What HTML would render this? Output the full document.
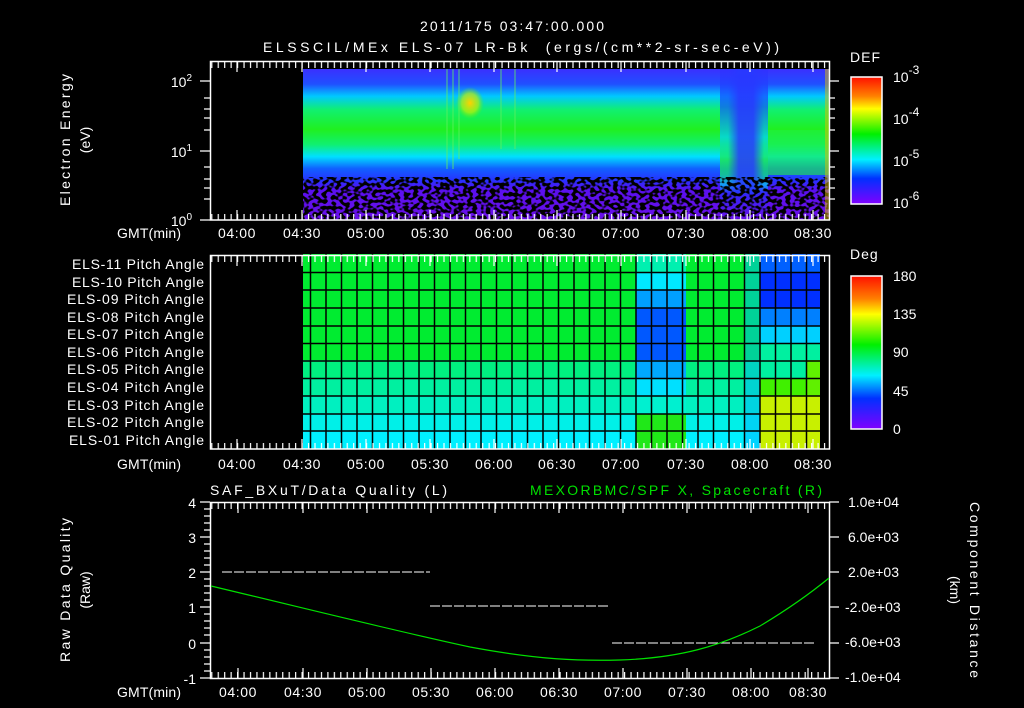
<!DOCTYPE html>
<html><head><meta charset="utf-8"><style>
html,body{margin:0;padding:0;background:#000;}
svg{display:block}
text{font-family:"Liberation Sans",sans-serif;fill:#fff;font-size:14px}
</style></head><body>
<svg width="1024" height="708" viewBox="0 0 1024 708" xmlns="http://www.w3.org/2000/svg">
<defs>
<linearGradient id="spec" x1="0" y1="69" x2="0" y2="220" gradientUnits="userSpaceOnUse">
<stop offset="0" stop-color="#3a30ff"/>
<stop offset="0.1" stop-color="#2050ff"/>
<stop offset="0.18" stop-color="#00c8ff"/>
<stop offset="0.27" stop-color="#10f070"/>
<stop offset="0.4" stop-color="#20f020"/>
<stop offset="0.5" stop-color="#10f070"/>
<stop offset="0.58" stop-color="#00e0ff"/>
<stop offset="0.66" stop-color="#1060ff"/>
<stop offset="0.74" stop-color="#2830ff"/>
<stop offset="0.8" stop-color="#5a10f0"/>
<stop offset="1" stop-color="#6a10e8"/>
</linearGradient>
<linearGradient id="spec2" x1="0" y1="69" x2="0" y2="220" gradientUnits="userSpaceOnUse">
<stop offset="0" stop-color="#3030ff"/>
<stop offset="0.25" stop-color="#1050ff"/>
<stop offset="0.45" stop-color="#00d0ff"/>
<stop offset="0.6" stop-color="#20f030"/>
<stop offset="0.7" stop-color="#10f070"/>
<stop offset="0.77" stop-color="#00d0ff"/>
<stop offset="0.82" stop-color="#2030ff"/>
<stop offset="1" stop-color="#6a10e8"/>
</linearGradient>
<linearGradient id="fadeL" x1="0" y1="0" x2="1" y2="0">
<stop offset="0" stop-color="#2838ff" stop-opacity="0"/>
<stop offset="0.3" stop-color="#2838ff" stop-opacity="0.85"/>
<stop offset="0.7" stop-color="#2838ff" stop-opacity="0.85"/>
<stop offset="1" stop-color="#2838ff" stop-opacity="0"/>
</linearGradient>
<radialGradient id="yel" cx="0.5" cy="0.5" r="0.5">
<stop offset="0" stop-color="#ffd000"/>
<stop offset="0.6" stop-color="#c0f000" stop-opacity="0.7"/>
<stop offset="1" stop-color="#60f000" stop-opacity="0"/>
</radialGradient>
<linearGradient id="cb1" x1="0" y1="0" x2="0" y2="1">
<stop offset="0" stop-color="#ff1000"/>
<stop offset="0.15" stop-color="#ff8000"/>
<stop offset="0.25" stop-color="#ffff00"/>
<stop offset="0.45" stop-color="#00f000"/>
<stop offset="0.6" stop-color="#00f0c0"/>
<stop offset="0.65" stop-color="#00f0ff"/>
<stop offset="0.8" stop-color="#0030ff"/>
<stop offset="1" stop-color="#8000ff"/>
</linearGradient>
<filter id="noise" x="0" y="0" width="100%" height="100%">
<feTurbulence type="fractalNoise" baseFrequency="0.22 0.3" numOctaves="1" seed="3"/>
<feColorMatrix type="matrix" values="0 0 0 0 0  0 0 0 0 0  0 0 0 0 0  0 0 0 -9 5.0"/>
</filter>
<pattern id="tk" x="211.2" y="0" width="6.45" height="708" patternUnits="userSpaceOnUse">
<rect x="0" y="0" width="1.2" height="708" fill="#fff"/>
</pattern>
</defs>

<text x="420" y="31" font-size="16" textLength="184" lengthAdjust="spacing">2011/175 03:47:00.000</text>
<text x="263" y="52" font-size="16" textLength="516" lengthAdjust="spacing" xml:space="preserve">ELSSCIL/MEx ELS-07 LR-Bk  (ergs/(cm**2-sr-sec-eV))</text>

<!-- PANEL 1 -->
<rect x="303" y="69" width="526" height="151" fill="url(#spec)"/>
<rect x="720" y="69" width="48" height="151" fill="url(#spec2)" opacity="0.7"/>
<rect x="728" y="69" width="36" height="125" fill="url(#fadeL)"/>
<rect x="768" y="130" width="61" height="45" fill="#20f040" opacity="0.6"/>
<ellipse cx="470" cy="103" rx="14" ry="16" fill="url(#yel)"/>
<g opacity="0.4" fill="#60f060">
<rect x="446" y="69" width="2" height="100"/><rect x="452" y="69" width="2" height="100"/><rect x="458" y="69" width="2" height="90"/><rect x="500" y="69" width="2" height="80"/><rect x="514" y="69" width="2" height="80"/>
</g>
<rect x="303" y="177" width="526" height="43" fill="#000" filter="url(#noise)"/>
<rect x="825" y="69" width="4" height="151" fill="#e0c000" opacity="0.5"/>
<rect x="210.5" y="61.5" width="619" height="158.5" fill="none" stroke="#fff" stroke-width="1.5"/>
<rect x="211" y="62" width="618" height="6" fill="url(#tk)"/>
<rect x="211" y="214" width="618" height="6" fill="url(#tk)"/>
<g stroke="#fff" stroke-width="1.2">
<path d="M237 62V72M302 62V72M366 62V72M430 62V72M494 62V72M557 62V72M621 62V72M686 62V72M750 62V72M813 62V72M237 220V210M302 220V210M366 220V210M430 220V210M494 220V210M557 220V210M621 220V210M686 220V210M750 220V210M813 220V210"/>
<path d="M200 81H210M200 151H210M200 220H210 M204 98H210M204 109H210M204 118H210M204 130H210M204 167H210M204 179H210M204 188H210M204 199H210M829 81H839M829 151H839M829 98H835M829 109H835M829 118H835M829 130H835M829 167H835M829 179H835M829 188H835M829 199H835"/>
</g>
<text x="192" y="87" text-anchor="end">10<tspan font-size="10" dy="-6">2</tspan></text>
<text x="192" y="157" text-anchor="end">10<tspan font-size="10" dy="-6">1</tspan></text>
<text x="192" y="226" text-anchor="end">10<tspan font-size="10" dy="-6">0</tspan></text>
<text transform="translate(70,140) rotate(-90)" x="-66" font-size="16" textLength="132" lengthAdjust="spacing">Electron Energy</text>
<text transform="translate(90,140) rotate(-90)" text-anchor="middle" font-size="16">(eV)</text>
<text x="117" y="238" font-size="15" textLength="64" lengthAdjust="spacing">GMT(min)</text>
<g text-anchor="middle" font-size="15" letter-spacing="0.6">
<text x="237" y="238">04:00</text><text x="302" y="238">04:30</text><text x="366" y="238">05:00</text><text x="430" y="238">05:30</text><text x="494" y="238">06:00</text><text x="557" y="238">06:30</text><text x="621" y="238">07:00</text><text x="686" y="238">07:30</text><text x="750" y="238">08:00</text><text x="813" y="238">08:30</text>
</g>
<rect x="851" y="77" width="31" height="127" fill="url(#cb1)" stroke="#fff" stroke-width="1.5"/>
<text x="850" y="62" font-size="17" letter-spacing="1">DEF</text>
<text x="893" y="82" font-size="17">10<tspan font-size="12" dy="-8">-3</tspan></text>
<text x="893" y="124" font-size="17">10<tspan font-size="12" dy="-8">-4</tspan></text>
<text x="893" y="166" font-size="17">10<tspan font-size="12" dy="-8">-5</tspan></text>
<text x="893" y="208" font-size="17">10<tspan font-size="12" dy="-8">-6</tspan></text>

<!-- PANEL 2 -->
<g>
<rect x="303" y="254" width="517" height="106" fill="#00ec30"/>
<rect x="303" y="360" width="517" height="18" fill="#00f080"/>
<rect x="303" y="378" width="517" height="18" fill="#00f0a0"/>
<rect x="303" y="396" width="517" height="18" fill="#00f0c0"/>
<rect x="303" y="414" width="517" height="18" fill="#00f0e8"/>
<rect x="303" y="431" width="517" height="18" fill="#00f0ff"/>
<rect x="636" y="254" width="50" height="18" fill="#00f0b0"/>
<rect x="636" y="272" width="50" height="18" fill="#00e8ff"/>
<rect x="636" y="290" width="50" height="18" fill="#00a0ff"/>
<rect x="636" y="308" width="50" height="52" fill="#0058ff"/>
<rect x="636" y="360" width="50" height="18" fill="#00a8ff"/>
<rect x="636" y="378" width="50" height="18" fill="#00e0ff"/>
<rect x="636" y="396" width="50" height="18" fill="#00f0d0"/>
<rect x="636" y="414" width="50" height="35" fill="#20e818"/>
<rect x="760" y="254" width="60" height="18" fill="#0060ff"/>
<rect x="760" y="272" width="60" height="36" fill="#0030ff"/>
<rect x="760" y="308" width="60" height="18" fill="#0080ff"/>
<rect x="760" y="326" width="60" height="18" fill="#00d0ff"/>
<rect x="760" y="344" width="60" height="34" fill="#00f0a0"/>
<rect x="760" y="378" width="60" height="18" fill="#40f000"/>
<rect x="760" y="396" width="60" height="53" fill="#c8f000"/>
<rect x="806" y="360" width="14" height="36" fill="#60f000"/>
<rect x="745" y="254" width="15" height="195" fill="#00b8ff" opacity="0.5"/>
</g>
<g stroke="#000" stroke-width="1.5">
<path d="M303 272.5H820M303 290H820M303 308H820M303 326H820M303 343.5H820M303 361H820M303 378.5H820M303 396H820M303 414H820M303 431H820"/>
<path d="M310.5 254V449M326 254V449M341.5 254V449M357 254V449M372.5 254V449M388 254V449M403.5 254V449M419 254V449M434.5 254V449M450 254V449M465.5 254V449M481 254V449M496.5 254V449M512 254V449M527.5 254V449M543 254V449M558.5 254V449M574 254V449M589.5 254V449M605 254V449M620.5 254V449M636 254V449M651.5 254V449M667 254V449M682.5 254V449M698 254V449M713.5 254V449M729 254V449M744.5 254V449M760 254V449M775.5 254V449M791 254V449M806.5 254V449"/>
</g>
<rect x="210.5" y="255.5" width="619" height="193.5" fill="none" stroke="#fff" stroke-width="1.5"/>
<rect x="211" y="256" width="618" height="6" fill="url(#tk)"/>
<rect x="211" y="443" width="618" height="6" fill="url(#tk)"/>
<g stroke="#fff" stroke-width="1.2">
<path d="M237 256V266M302 256V266M366 256V266M430 256V266M494 256V266M557 256V266M621 256V266M686 256V266M750 256V266M813 256V266M237 449V439M302 449V439M366 449V439M430 449V439M494 449V439M557 449V439M621 449V439M686 449V439M750 449V439M813 449V439"/>
</g>
<g font-size="14">
<text x="72" y="269" textLength="132" lengthAdjust="spacing">ELS-11 Pitch Angle</text><text x="72" y="287" textLength="132" lengthAdjust="spacing">ELS-10 Pitch Angle</text><text x="67" y="304" textLength="137" lengthAdjust="spacing">ELS-09 Pitch Angle</text><text x="67" y="322" textLength="137" lengthAdjust="spacing">ELS-08 Pitch Angle</text><text x="67" y="339" textLength="137" lengthAdjust="spacing">ELS-07 Pitch Angle</text><text x="67" y="357" textLength="137" lengthAdjust="spacing">ELS-06 Pitch Angle</text><text x="67" y="374" textLength="137" lengthAdjust="spacing">ELS-05 Pitch Angle</text><text x="67" y="392" textLength="137" lengthAdjust="spacing">ELS-04 Pitch Angle</text><text x="67" y="410" textLength="137" lengthAdjust="spacing">ELS-03 Pitch Angle</text><text x="67" y="427" textLength="137" lengthAdjust="spacing">ELS-02 Pitch Angle</text><text x="69" y="445" textLength="135" lengthAdjust="spacing">ELS-01 Pitch Angle</text>
</g>
<text x="117" y="469" font-size="15" textLength="64" lengthAdjust="spacing">GMT(min)</text>
<g text-anchor="middle" font-size="15" letter-spacing="0.6">
<text x="237" y="469">04:00</text><text x="302" y="469">04:30</text><text x="366" y="469">05:00</text><text x="430" y="469">05:30</text><text x="494" y="469">06:00</text><text x="557" y="469">06:30</text><text x="621" y="469">07:00</text><text x="686" y="469">07:30</text><text x="750" y="469">08:00</text><text x="813" y="469">08:30</text>
</g>
<rect x="851" y="276" width="31" height="153" fill="url(#cb1)" stroke="#fff" stroke-width="1.5"/>
<text x="850" y="259" font-size="17" letter-spacing="1">Deg</text>
<g font-size="17"><text x="893" y="281">180</text><text x="893" y="319">135</text><text x="893" y="357">90</text><text x="893" y="396">45</text><text x="893" y="434">0</text></g>

<!-- PANEL 3 -->
<rect x="210.5" y="502.5" width="619" height="176" fill="none" stroke="#fff" stroke-width="1.5"/>
<rect x="211" y="503" width="618" height="6" fill="url(#tk)"/>
<rect x="211" y="672" width="618" height="6" fill="url(#tk)"/>
<g stroke="#fff" stroke-width="1.2">
<path d="M238 503V513M303 503V513M367 503V513M431 503V513M495 503V513M559 503V513M623 503V513M687 503V513M751 503V513M808 503V513M238 678V668M303 678V668M367 678V668M431 678V668M495 678V668M559 678V668M623 678V668M687 678V668M751 678V668M808 678V668"/>
<path d="M200 502H210M200 537H210M200 572H210M200 607H210M200 643H210M200 678H210M829 502H839M829 537H839M829 572H839M829 607H839M829 643H839M829 678H839"/>
<path d="M204 509H210M204 516H210M204 523H210M204 530H210M204 544H210M204 551H210M204 558H210M204 565H210M204 579H210M204 586H210M204 593H210M204 600H210M204 614H210M204 621H210M204 628H210M204 635H210M204 650H210M204 657H210M204 664H210M204 671H210"/>
</g>
<g text-anchor="end" font-size="15"><text x="196" y="508">4</text><text x="196" y="543">3</text><text x="196" y="578">2</text><text x="196" y="613">1</text><text x="196" y="649">0</text><text x="196" y="684">-1</text></g>
<g font-size="13"><text x="848" y="507">1.0e+04</text><text x="848" y="542">6.0e+03</text><text x="848" y="577">2.0e+03</text><text x="845" y="612">-2.0e+03</text><text x="845" y="647">-6.0e+03</text><text x="845" y="682">-1.0e+04</text></g>
<text x="210" y="495" font-size="16" textLength="237" lengthAdjust="spacing">SAF_BXuT/Data Quality (L)</text>
<text x="530" y="495" font-size="16" textLength="292" lengthAdjust="spacing" style="fill:#00e000">MEXORBMC/SPF X, Spacecraft (R)</text>
<text transform="translate(70,590) rotate(-90)" x="-72" font-size="16" textLength="144" lengthAdjust="spacing">Raw Data Quality</text>
<text transform="translate(90,590) rotate(-90)" text-anchor="middle" font-size="16">(Raw)</text>
<text transform="translate(970,590) rotate(90)" x="-88" font-size="16" textLength="176" lengthAdjust="spacing">Component Distance</text>
<text transform="translate(950,590) rotate(90)" text-anchor="middle" font-size="16">(km)</text>
<g stroke="#fff" stroke-width="1" stroke-dasharray="10,2">
<path d="M222 572H430M430 606H610M612 643H815"/>
</g>
<path d="M211 586 C320 612 400 632 470 647 C540 660 580 661 620 660 C680 658 720 646 760 626 C790 608 812 592 829 578" fill="none" stroke="#00e000" stroke-width="1.2"/>
<text x="117" y="697" font-size="15" textLength="64" lengthAdjust="spacing">GMT(min)</text>
<g text-anchor="middle" font-size="15" letter-spacing="0.6">
<text x="238" y="697">04:00</text><text x="303" y="697">04:30</text><text x="367" y="697">05:00</text><text x="431" y="697">05:30</text><text x="495" y="697">06:00</text><text x="559" y="697">06:30</text><text x="623" y="697">07:00</text><text x="687" y="697">07:30</text><text x="751" y="697">08:00</text><text x="808" y="697">08:30</text>
</g>
</svg>
</body></html>
